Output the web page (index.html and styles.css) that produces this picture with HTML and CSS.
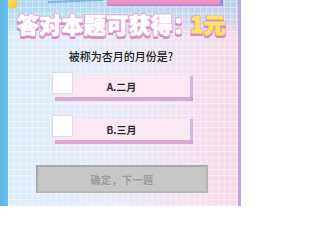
FILE: index.html
```html
<!DOCTYPE html>
<html lang="zh">
<head>
<meta charset="utf-8">
<link rel="stylesheet" href="styles.css">
</head>
<body>
<div class="page">
  <div class="deco-yellow"></div>
  <div class="deco-line"></div>
  <div class="deco-bar"></div>
  <div class="panel">
    <h1 class="title">答对本题可获得<span class="colon">：</span><span class="prize">1元</span></h1>
    <p class="question">被称为杏月的月份是?</p>
    <div class="options">
      <div class="option"><span class="check"></span><span class="label">A.二月</span></div>
      <div class="option"><span class="check"></span><span class="label">B.三月</span></div>
    </div>
    <div class="btn">确定，下一题</div>
  </div>
</div>
</body>
</html>
```
FILE: styles.css
```css
html, body {
  margin: 0;
  padding: 0;
}
body {
  width: 241px;
  height: 206px;
  overflow: hidden;
  font-family: "Noto Sans CJK SC", "Noto Sans", sans-serif;
}
.page {
  position: relative;
  width: 241px;
  height: 206px;
  display: flex;
  background: linear-gradient(90deg, #5db6e2 0, #6fc0e8 8px, #b8def3 8px, #d3e6f6 40%, #ecdcef 75%, #f4d2e4 100%);
}
.panel {
  flex: 1;
  margin-left: 8px;
  margin-right: 3px;
  display: flex;
  flex-direction: column;
  align-items: stretch;
  background:
    repeating-linear-gradient(90deg, rgba(255,255,255,0.35) 0 1px, transparent 1px 6px),
    repeating-linear-gradient(0deg, rgba(255,255,255,0.35) 0 1px, transparent 1px 6px),
    linear-gradient(180deg, rgba(140,205,236,0.6) 0, rgba(140,205,236,0.25) 24px, rgba(255,255,255,0.15) 36px),
    linear-gradient(90deg, #d6ebf8 0, #e4e6f6 45%, #f1dcec 80%, #f5d5e6 100%);
  box-shadow: 3px 0 0 #bba8dd;
}
.deco-yellow {
  position: absolute;
  left: 8px;
  top: -2px;
  width: 9px;
  height: 10px;
  background: linear-gradient(135deg, #ffe36b, #f7c544);
  border-radius: 1px;
  z-index: 2;
}
.deco-line {
  position: absolute;
  left: 48px;
  top: 0;
  width: 55px;
  height: 2px;
  background: #5a8fc8;
  opacity: 0.6;
  transform: skewY(-2deg);
  z-index: 2;
}
.deco-bar {
  position: absolute;
  left: 107px;
  top: -3px;
  width: 113px;
  height: 7px;
  background: #e995c4;
  border-bottom: 2px solid #b98bd6;
  border-right: 3px solid #9b86d6;
  z-index: 2;
}
.title {
  margin: 12px 0 0 0;
  height: 22px;
  text-align: center;
  font-size: 22px;
  line-height: 22px;
  font-weight: 900;
  letter-spacing: 0.3px;
  color: #ffffff;
  -webkit-text-stroke: 0.6px #ffffff;
  text-shadow:
    1px 0 0 #e6a0d0, -1px 0 0 #e6a0d0, 0 1px 0 #e6a0d0, 0 -1px 0 #e6a0d0,
    1px 1px 0 #e6a0d0, -1px 1px 0 #e6a0d0, 1px -1px 0 #e6a0d0, -1px -1px 0 #e6a0d0,
    0 2px 0 #d58ac3, 1px 3px 0 #d58ac3, -1px 3px 0 #d58ac3;
  white-space: nowrap;
  padding-right: 3px;
}
.colon {
  letter-spacing: -5px;
}
.prize {
  color: #ffe55a;
  -webkit-text-stroke: 0.6px #ffe55a;
}
.question {
  margin: 15px 0 0 0;
  height: 14px;
  text-align: center;
  font-size: 11px;
  line-height: 14px;
  color: #222222;
  font-weight: 500;
  padding-right: 4px;
}
.options {
  margin-top: 13px;
  display: flex;
  flex-direction: column;
  gap: 22px;
  padding-left: 47px;
}
.option {
  position: relative;
  width: 135px;
  height: 21px;
  background: #fbe8f2;
  box-shadow: 3px 0 0 #cbbde4, 0 4px 0 #dcaad0, 3px 4px 0 #c8a7d4;
  display: flex;
  align-items: center;
  justify-content: center;
}
.check {
  position: absolute;
  left: -3px;
  top: -4px;
  width: 19px;
  height: 20px;
  background: #ffffff;
  border: 1px solid #e2dbe6;
}
.label {
  font-size: 10px;
  font-weight: 700;
  color: #2a2a2a;
  line-height: 12px;
  padding-right: 2px;
}
.btn {
  margin: 25px 0 0 28px;
  width: 168px;
  height: 24px;
  background: #c7c7c7;
  border: 2px solid #a9a9a9;
  border-bottom-color: #b8b8b8;
  border-right-color: #b5b5b5;
  display: flex;
  align-items: center;
  justify-content: center;
  font-size: 10px;
  font-weight: 700;
  color: #9c9c9c;
  letter-spacing: 0.5px;
}
```
